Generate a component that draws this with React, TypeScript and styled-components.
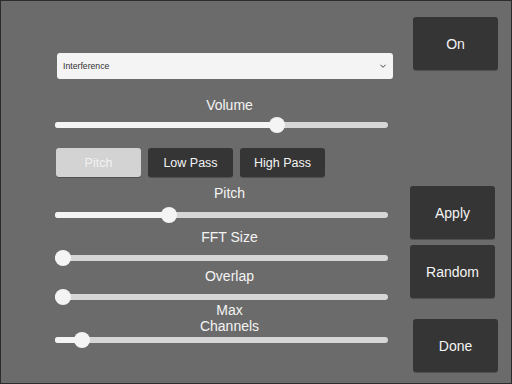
import styled, { createGlobalStyle } from 'styled-components';

const GlobalStyle = createGlobalStyle`
  html, body {
    margin: 0;
    padding: 0;
    background: #6b6b6b;
  }
  * {
    box-sizing: border-box;
  }
`;

const Frame = styled.div`
  width: 512px;
  height: 384px;
  border: 1px solid #2c2c2c;
  background: #6b6b6b;
  display: flex;
  font-family: "Liberation Sans", Arial, sans-serif;
  color: #f4f4f4;
  overflow: hidden;
`;

const LeftColumn = styled.div`
  width: 333px;
  margin-left: 54px;
  display: flex;
  flex-direction: column;
`;

const RightColumn = styled.div`
  display: flex;
  flex-direction: column;
  margin-left: 22px;
`;

const Dropdown = styled.div`
  margin: 52px 0 0 2px;
  width: 336px;
  height: 26px;
  background: #f4f4f4;
  border-radius: 3px;
  display: flex;
  align-items: center;
  justify-content: space-between;
  padding: 0 6px;
  color: #323232;
  font-size: 8.7px;
`;

const Label = styled.div<{ $top: number }>`
  margin-top: ${p => p.$top}px;
  padding-left: 16px;
  text-align: center;
  font-size: 14px;
  line-height: 16px;
`;

const Track = styled.div<{ $top: number }>`
  position: relative;
  margin-top: ${p => p.$top}px;
  height: 12px;
  display: flex;
  align-items: center;
`;

const Rail = styled.div`
  position: relative;
  width: 100%;
  height: 6px;
  border-radius: 3px;
  background: #d6d6d6;
  overflow: hidden;
`;

const Fill = styled.div`
  height: 100%;
  background: #f4f4f4;
`;

const Thumb = styled.div`
  position: absolute;
  top: -2px;
  width: 16px;
  height: 16px;
  border-radius: 50%;
  background: #f4f4f4;
`;

const TabRow = styled.div`
  margin: 17px 0 0 1px;
  display: flex;
  gap: 7px;
`;

const Tab = styled.div<{ $active?: boolean }>`
  width: 85px;
  height: 29px;
  border-radius: 3px;
  display: flex;
  align-items: center;
  justify-content: center;
  font-size: 12.5px;
  background: ${p => (p.$active ? '#d3d3d3' : '#353535')};
  color: ${p => (p.$active ? '#f2f2f2' : '#f4f4f4')};
  box-shadow: 0 1px 0 rgba(0, 0, 0, 0.25);
`;

const SideButton = styled.div<{ $top: number; $shift: number }>`
  margin-top: ${p => p.$top}px;
  margin-left: ${p => p.$shift}px;
  width: 85px;
  height: 53px;
  border-radius: 3px;
  background: #353535;
  display: flex;
  align-items: center;
  justify-content: center;
  font-size: 14px;
  box-shadow: 0 1px 0 rgba(0, 0, 0, 0.25);
`;

const sliderWidth = 333;
const thumbSize = 16;

function Slider({ value, top }: { value: number; top: number }) {
  const left = value * (sliderWidth - thumbSize);
  return (
    <Track $top={top}>
      <Rail>
        <Fill style={{ width: left + thumbSize / 2 }} />
      </Rail>
      <Thumb style={{ left }} />
    </Track>
  );
}

function Chevron() {
  return (
    <svg width="8" height="6" viewBox="0 0 8 6">
      <path d="M1.5 1.8 L4 4.3 L6.5 1.8" fill="none" stroke="#444" strokeWidth="1" />
    </svg>
  );
}

export default function App() {
  return (
    <>
      <GlobalStyle />
      <Frame>
        <LeftColumn>
          <Dropdown>
            <span>Interference</span>
            <Chevron />
          </Dropdown>

          <Label $top={18}>Volume</Label>
          <Slider value={0.675} top={6} />

          <TabRow>
            <Tab $active>Pitch</Tab>
            <Tab>Low Pass</Tab>
            <Tab>High Pass</Tab>
          </TabRow>

          <Label $top={8}>Pitch</Label>
          <Slider value={0.334} top={8} />

          <Label $top={8}>FFT Size</Label>
          <Slider value={0} top={7} />

          <Label $top={4}>Overlap</Label>
          <Slider value={0} top={7} />

          <Label $top={-1}>Max<br />Channels</Label>
          <Slider value={0.06} top={0} />
        </LeftColumn>

        <RightColumn>
          <SideButton $top={16} $shift={3}>On</SideButton>
          <SideButton $top={116} $shift={0}>Apply</SideButton>
          <SideButton $top={6} $shift={0}>Random</SideButton>
          <SideButton $top={21} $shift={3}>Done</SideButton>
        </RightColumn>
      </Frame>
    </>
  );
}
